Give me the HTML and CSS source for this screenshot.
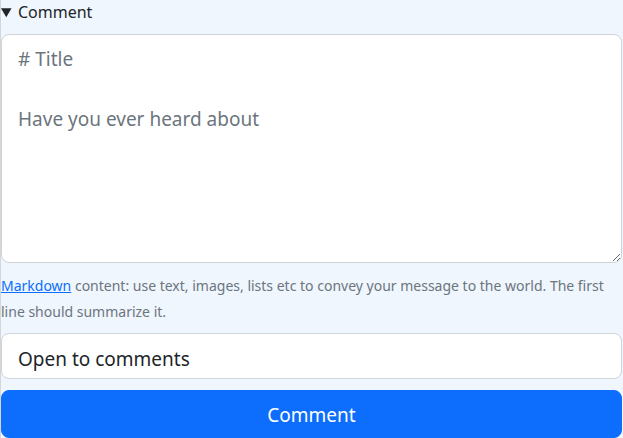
FILE: index.html
```html
<!DOCTYPE html>
<html lang="en">
<head>
<meta charset="utf-8">
<title>Comment</title>
<link rel="stylesheet" href="styles.css">
</head>
<body>
<div class="panel">
  <details class="comment-box" open>
    <summary class="comment-summary">Comment</summary>
    <form class="comment-form">
      <textarea class="field field-area" placeholder="# Title

Have you ever heard about"></textarea>
      <p class="help-text"><a href="#" class="help-link">Markdown</a> content: use text, images, lists etc to convey your message to the world. The first line should summarize it.</p>
      <input class="field field-input" type="text" value="Open to comments">
      <button class="btn-primary" type="button">Comment</button>
    </form>
  </details>
</div>
</body>
</html>
```
FILE: styles.css
```css
html, body {
  margin: 0;
  padding: 0;
  background: #eff6fe;
  overflow: hidden;
}
.panel {
  border-left: 1px solid #d4d6d8;
  background: #eff6fe;
  min-height: 438px;
  font-family: "Noto Sans", "Open Sans", sans-serif;
  color: #212529;
}
.comment-summary {
  font-size: 16px;
  line-height: 24px;
  height: 24px;
  cursor: pointer;
  margin-bottom: 10px;
}
.comment-form {
  display: flex;
  flex-direction: column;
  padding-right: 1px;
}
.field {
  font-family: inherit;
  font-size: 19px;
  line-height: 30px;
  color: #212529;
  background: #fff;
  border: 1px solid #ced4da;
  border-radius: 8px;
  padding: 7px 16px;
  box-sizing: border-box;
  width: 100%;
  margin: 0;
  outline: none;
}
.field::placeholder {
  color: #6c757d;
}
.field-area {
  height: 229px;
  padding-top: 9px;
  resize: vertical;
}
.help-text {
  margin: 0;
  font-size: 14px;
  line-height: 26px;
  color: #6c757d;
  padding: 10px 0 8px;
}
.help-link {
  color: #0d6efd;
  text-decoration: underline;
}
.field-input {
  height: 46px;
  padding-top: 10px;
  padding-bottom: 4px;
}
.btn-primary {
  margin-top: 11px;
  height: 48px;
  padding-top: 2px;
  font-family: inherit;
  font-size: 19px;
  color: #fff;
  background: #0d6efd;
  border: 1px solid #0d6efd;
  border-radius: 8px;
  width: 100%;
}
```
